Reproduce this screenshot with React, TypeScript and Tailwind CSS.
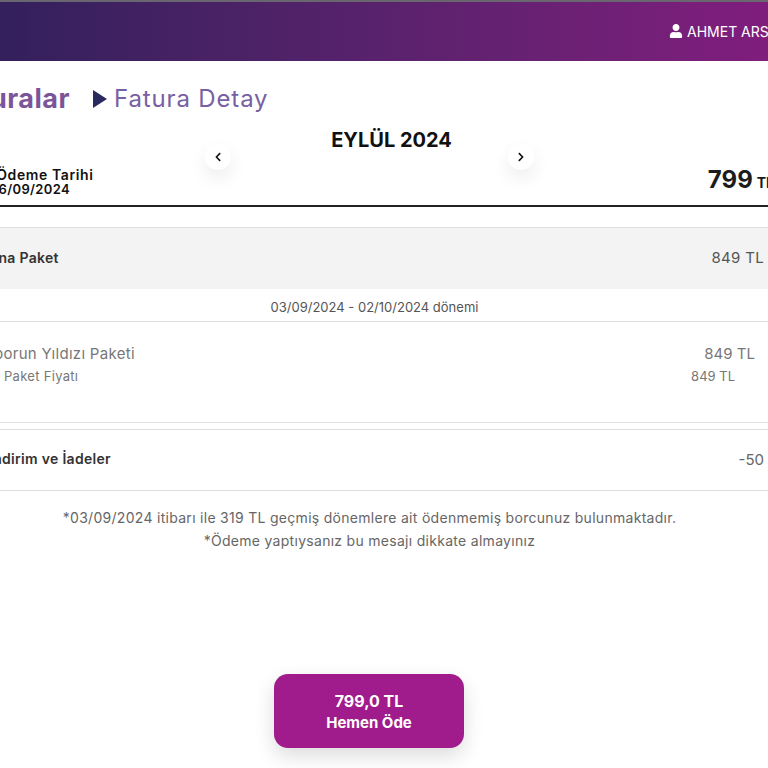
import { FaChevronLeft, FaChevronRight, FaUser } from "react-icons/fa";

export default function App() {
  return (
    <div className="h-[768px] w-[768px] overflow-hidden bg-white font-['Inter',sans-serif]">
      {/* header */}
      <div className="flex h-[61px] justify-end border-t-2 border-[#6a6670] bg-gradient-to-r from-[#33205c] to-[#801d7d]">
        <div className="flex w-[99px] shrink-0 items-center gap-[4px] overflow-hidden whitespace-nowrap pb-[1px]">
          <FaUser className="shrink-0 text-[14px] text-white" />
          <span className="text-[14px] text-white">AHMET ARSLAN</span>
        </div>
      </div>

      <div className="ml-[-60px] w-[859px]">
        {/* breadcrumb */}
        <div className="flex h-[56px] items-end">
          <span className="w-[130px] text-right text-[27px] leading-[36px] font-bold tracking-[0.5px] text-[#7b5599]">Faturalar</span>
          <svg className="mb-[9px] ml-[23px]" width="14" height="18" viewBox="0 0 14 18">
            <polygon points="0,0 14,9 0,18" fill="#2a2a5e" />
          </svg>
          <span className="ml-[7px] text-[24px] leading-[36px] tracking-[0.85px] text-[#7860a2]">Fatura Detay</span>
        </div>

        {/* month */}
        <div className="mt-[11px] pl-[44px] text-center text-[20px] leading-[24px] font-bold text-[#111]">EYLÜL 2024</div>

        {/* summary */}
        <div className="grid h-[55px] grid-cols-[1fr_328px_1fr] border-b-2 border-[#222]">
          <div className="pt-[15px] text-right leading-[15px] font-semibold text-[#111]">
            <div className="pr-[112px] text-[14px] tracking-[0.6px] whitespace-nowrap">Son Ödeme Tarihi</div>
            <div className="w-[130px] text-right text-[13px] tracking-[0.35px]">16/09/2024</div>
          </div>
          <div className="-mt-[8px] -ml-[1px] flex items-start justify-between">
            <button className="flex h-[26px] w-[26px] items-center justify-center rounded-full bg-white shadow-[0_8px_18px_rgba(0,0,0,0.08)]">
              <FaChevronLeft className="text-[10px] text-[#111]" />
            </button>
            <button className="flex h-[26px] w-[26px] items-center justify-center rounded-full bg-white shadow-[0_8px_18px_rgba(0,0,0,0.08)]">
              <FaChevronRight className="text-[10px] text-[#111]" />
            </button>
          </div>
          <div className="flex items-end justify-end gap-[4px] pr-[25px] pb-[11px] font-bold text-[#1c1c1c]">
            <span className="text-[24px] leading-[28px]">799</span>
            <span className="text-[14px] leading-[22px]">TL</span>
          </div>
        </div>

        {/* package */}
        <div className="mt-[20px] flex h-[62px] items-center justify-between border-t border-[#dedede] bg-[#f3f3f3] pr-[35px] pl-[48px]">
          <span className="-mt-[2px] text-[14px] font-semibold tracking-[0.3px] text-[#333]">Ana Paket</span>
          <span className="text-[15px] tracking-[0.3px] text-[#555]">849 TL</span>
        </div>
        <div className="flex h-[33px] items-center justify-center border-b border-[#dcdcdc] pt-[5px] pl-[10px] text-[13px] text-[#555]">
          03/09/2024 - 02/10/2024 dönemi
        </div>

        {/* item */}
        <div className="flex h-[101px] flex-col border-b border-[#e0e0e0] pt-[22px]">
          <div className="flex h-[20px] items-center justify-between pr-[44px] pl-[44px] text-[15px] text-[#777]">
            <span className="tracking-[0.3px]">Sporun Yıldızı Paketi</span>
            <span>849 TL</span>
          </div>
          <div className="mt-[3px] flex h-[20px] items-center justify-between pr-[64px] pl-[64px] text-[13px] text-[#777]">
            <span className="tracking-[0.3px]">Paket Fiyatı</span>
            <span>849 TL</span>
          </div>
        </div>

        {/* discounts */}
        <div className="mt-[6px] flex h-[62px] items-center justify-between border-y border-[#dedede] pr-[35px] pl-[49px]">
          <span className="-mt-[3px] text-[14px] font-semibold tracking-[0.3px] text-[#333]">İndirim ve İadeler</span>
          <span className="text-[15px] text-[#666]">-50</span>
        </div>

        {/* notes */}
        <div className="mt-[15px] text-center text-[14px] leading-[23px] tracking-[0.29px] text-[#666]">
          <p>*03/09/2024 itibarı ile 319 TL geçmiş dönemlere ait ödenmemiş borcunuz bulunmaktadır.</p>
          <p>*Ödeme yaptıysanız bu mesajı dikkate almayınız</p>
        </div>

        {/* pay button */}
        <div className="mt-[122px] flex justify-center pr-[1px]">
          <button className="flex h-[74px] w-[190px] flex-col items-center justify-center rounded-[14px] bg-[#a01c8c] pt-[1px] font-bold text-white shadow-[0_8px_20px_rgba(0,0,0,0.14)]">
            <span className="text-[16px] leading-[22px]">799,0 TL</span>
            <span className="text-[15px] leading-[22px]">Hemen Öde</span>
          </button>
        </div>
      </div>
    </div>
  );
}
